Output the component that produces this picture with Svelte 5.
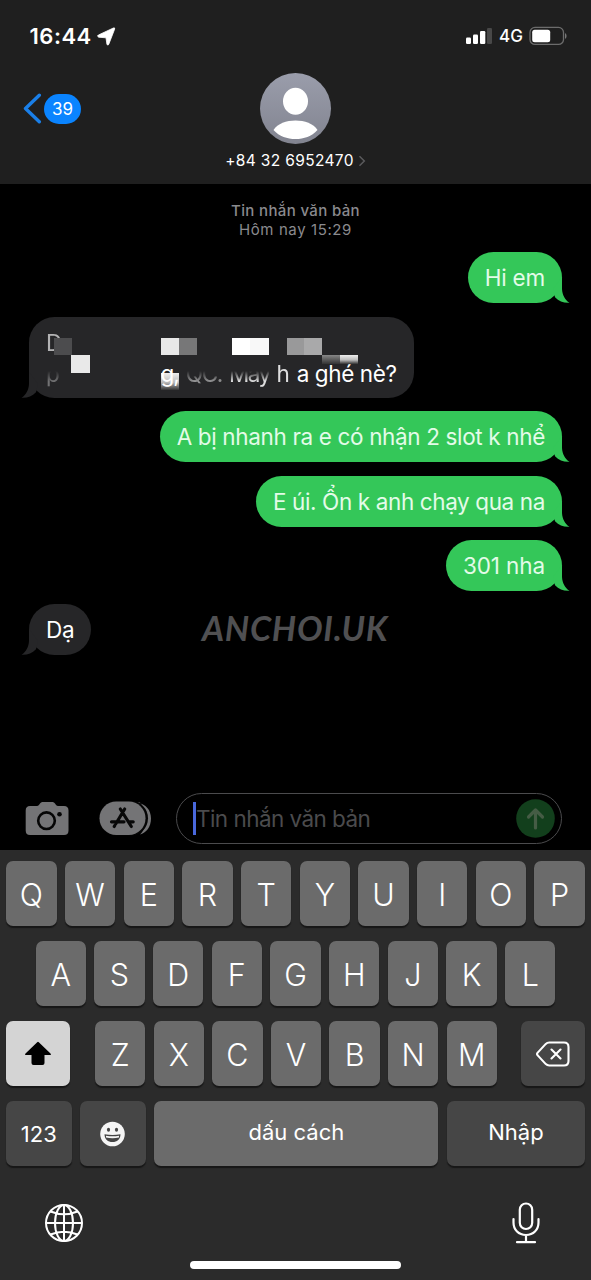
<script>
  const messages = [
    { id: 1, mine: true, text: 'Hi em', tracking: -0.2 },
    { id: 2, mine: false, censored: true },
    { id: 3, mine: true, text: 'A bị nhanh ra e có nhận 2 slot k nhể', tracking: -0.35 },
    { id: 4, mine: true, text: 'E úi. Ổn k anh chạy qua na', tracking: -0.38 },
    { id: 5, mine: true, text: '301 nha', tracking: -0.1 },
    { id: 6, mine: false, text: 'Dạ', tracking: -0.3 }
  ];

  // mosaic squares over the censored message
  const blocks = [
    { x: 25, y: 21, w: 18, h: 17, fill: '#4c4c4e' },
    { x: 42, y: 38, w: 19, h: 18, fill: '#e9e9e9' },
    { x: 132, y: 21, w: 18, h: 17, fill: '#e8e8e8' },
    { x: 150, y: 21, w: 18, h: 17, fill: '#777778' },
    { x: 203, y: 21, w: 18, h: 17, fill: '#ffffff' },
    { x: 221, y: 21, w: 19, h: 17, fill: '#f8f8f8' },
    { x: 258, y: 21, w: 17, h: 17, fill: '#99999a' },
    { x: 275, y: 21, w: 18, h: 17, fill: '#a9a9aa' },
    { x: 293, y: 38, w: 18, h: 9, fill: 'url(#fade-dim)' },
    { x: 311, y: 38, w: 18, h: 9, fill: 'url(#fade-light)' },
    { x: 132, y: 56, w: 18, h: 17, fill: 'url(#fade-light)' }
  ];

  const rows = ['QWERTYUIOP', 'ASDFGHJKL', 'ZXCVBNM'].map((row) => row.split(''));
</script>

<svelte:head>
  <title>Tin nhắn</title>
</svelte:head>

<main>
  <header>
    <div class="status">
      <span class="time">16:44</span>
      <svg class="location" width="19" height="19" viewBox="0 0 19 19" aria-hidden="true">
        <path d="M1.400 8 16.400 1q1.800-.6 1.200 1.200L11.800 17.200q-1 1.900-1.900 0L9 10.800 1.700 10.200q-2.200-1-.3-2.200Z" fill="#fff" stroke="#fff" stroke-width=".8" />
      </svg>
      <span class="spacer"></span>
      <svg width="28" height="18" viewBox="0 0 28 18" aria-hidden="true">
        <rect x="1" y="10.500" width="5" height="6.500" rx="1.200" fill="#fff" />
        <rect x="8" y="7.500" width="5" height="9.500" rx="1.200" fill="#fff" />
        <rect x="15" y="4" width="5.300" height="13" rx="1.200" fill="#fff" />
        <rect x="22" y="1" width="5" height="16" rx="1.200" fill="#484848" />
      </svg>
      <span class="network">4G</span>
      <svg width="39" height="20" viewBox="0 0 39 20" aria-hidden="true">
        <rect x="1" y="1.400" width="33.500" height="17" rx="5" fill="none" stroke="#6c6c6c" stroke-width="1.300" />
        <rect x="3.200" y="3.700" width="18" height="12.500" rx="2.500" fill="#fff" />
        <path d="M36 7.200c2 .5 2 5 0 5.500Z" fill="#777" />
      </svg>
    </div>

    <div class="contact">
      <div class="back">
        <svg width="19" height="31" viewBox="0 0 19 31" aria-hidden="true">
          <path d="M16.300 2.200 2.500 15.500l13.800 13.300" fill="none" stroke="#1a7fe8" stroke-width="3.400" stroke-linecap="round" stroke-linejoin="round" />
        </svg>
        <span class="badge">39</span>
      </div>
      <svg class="avatar" width="72" height="72" viewBox="0 0 72 72" aria-hidden="true">
        <defs>
          <linearGradient id="avatar-bg" x1="0" y1="0" x2="0" y2="1">
            <stop offset="0" stop-color="#9a9dab" />
            <stop offset="1" stop-color="#828490" />
          </linearGradient>
        </defs>
        <circle cx="35.500" cy="36.500" r="35.500" fill="url(#avatar-bg)" />
        <ellipse cx="35.500" cy="29.200" rx="12.500" ry="13.500" fill="#fff" />
        <path d="M13.500 58C17.500 51.500 26.500 48.500 35.500 48.500s18 3 22 9.500C51.500 64.500 44 67 35.500 67s-16-2.500-22-9Z" fill="#fff" />
      </svg>
      <div class="number">
        <span>+84 32 6952470</span>
        <svg width="8" height="12" viewBox="0 0 8 12" aria-hidden="true">
          <path d="m1.500 1.200 4.800 4.800-4.800 4.800" fill="none" stroke="#5a5a5c" stroke-width="1.500" />
        </svg>
      </div>
    </div>
  </header>

  <section class="thread">
    <p class="stamp"><span>Tin nhắn văn bản</span><span class="day">Hôm nay 15:29</span></p>

    {#each messages as message (message.id)}
      <div class="bubble" class:mine={message.mine} class:censored={message.censored}>
        {#if message.censored}
          <span class="line initial">D</span>
          <span class="line">
            <span class="smear first">p</span>
            <span class="covered">g,</span>
            <span class="smear code">QC.</span>
            <span class="smear name">Mấy</span>
            <span class="half">h</span>
            <span class="clear">a ghé nè?</span>
          </span>
          <svg class="mosaic" width="384" height="81" viewBox="0 0 384 81" aria-hidden="true">
            <defs>
              <linearGradient id="fade-light" x1="0" y1="0" x2="0" y2="1">
                <stop offset="0" stop-color="#eee" />
                <stop offset=".55" stop-color="#bbb" />
                <stop offset="1" stop-color="#333" />
              </linearGradient>
              <linearGradient id="fade-dim" x1="0" y1="0" x2="0" y2="1">
                <stop offset="0" stop-color="#888" />
                <stop offset="1" stop-color="#333" />
              </linearGradient>
            </defs>
            {#each blocks as block}
              <rect x={block.x} y={block.y} width={block.w} height={block.h} fill={block.fill} />
            {/each}
          </svg>
        {:else}
          <span style:letter-spacing="{message.tracking}px">{message.text}</span>
        {/if}
        <svg class="tail" width="25" height="27" viewBox="0 0 25 27" aria-hidden="true">
          <path d="M16 0v12c.3 6 3 11 7.500 13.800-5.500.4-10.500-1.300-14.500-5.600L7 12Z" fill="currentColor" />
        </svg>
      </div>
    {/each}

    <span class="watermark">ANCHOI.UK</span>
  </section>

  <section class="composer">
    <svg width="44" height="35" viewBox="0 0 44 35" aria-hidden="true">
      <path d="M5 5h7c1.500 0 2-1 3-2.500S17 1 18.500 1h8c1.500 0 2.500 0 3.500 1.500S31.500 5 33 5h6q4.500 0 4.500 4.500v20q0 4.500-4.500 4.500H5Q.7 34 .7 29.500v-20Q.7 5 5 5Z" fill="#747476" />
      <circle cx="21.500" cy="19.700" r="8.300" fill="none" stroke="#050505" stroke-width="2.600" />
      <circle cx="34.500" cy="13.300" r="2.300" fill="#050505" />
    </svg>
    <svg class="apps" width="54" height="35" viewBox="0 0 54 35" aria-hidden="true">
      <path d="M38 1.500c9 1.500 14 7.500 14 16S47 32 41 33.500c4-4 6-9 6-16S44 5.500 41 1.500Z" fill="#747476" />
      <rect x="0" y="0" width="49" height="34.500" rx="17.200" fill="#050505" />
      <rect x=".5" y=".5" width="46" height="33.500" rx="16.700" fill="#747476" />
      <path d="M25.700 8 17 22.500M21.300 8l11 17.500M12.500 20.800h12.500m5.500 0h3.700M15.200 25.500l.6-1" fill="none" stroke="#080808" stroke-width="3.200" stroke-linecap="round" />
    </svg>
    <div class="field">
      <span class="caret"></span>
      <span class="placeholder">Tin nhắn văn bản</span>
      <svg width="39" height="39" viewBox="0 0 39 39" aria-hidden="true">
        <circle cx="19.500" cy="19.500" r="19.300" fill="#123f1c" />
        <path d="M19.500 29V11.500m-7 6.500 7-7 7 7" fill="none" stroke="#455c45" stroke-width="3.200" stroke-linecap="round" stroke-linejoin="round" />
      </svg>
    </div>
  </section>

  <section class="keyboard">
    {#each rows as row, index}
      <div class="row">
        {#if index === 2}
          <div class="key shift">
            <svg width="28" height="25" viewBox="0 0 28 25" aria-hidden="true">
              <path d="M13.200 1.200q.8-.8 1.600 0L26.500 12.500q1.200 1.500-.8 1.500h-5.200v8q0 2-2 2h-9q-2 0-2-2v-8H2.300q-2 0-.8-1.500Z" fill="#000" />
            </svg>
          </div>
        {/if}
        {#each row as letter}
          <div class="key letter">{letter}</div>
        {/each}
        {#if index === 2}
          <div class="key dark delete">
            <svg width="34" height="26" viewBox="0 0 34 26" aria-hidden="true">
              <path d="M13.200 1.500H28q4.500 0 4.500 4.500v14q0 4.500-4.500 4.500H13.200q-2 0-3.400-1.400L1.700 14.400q-1.300-1.400 0-2.800L9.800 2.900q1.400-1.400 3.400-1.400ZM15.500 8.500l9 9m0-9-9 9" fill="none" stroke="#fff" stroke-width="2.100" stroke-linecap="round" stroke-linejoin="round" />
            </svg>
          </div>
        {/if}
      </div>
    {/each}

    <div class="row bottom">
      <div class="key dark numbers">123</div>
      <div class="key dark emoji">
        <svg width="26" height="26" viewBox="0 0 26 26" aria-hidden="true">
          <circle cx="12.500" cy="13" r="12.300" fill="#f5f5f5" />
          <ellipse cx="8.500" cy="8.800" rx="1.600" ry="2" fill="#444" />
          <ellipse cx="16.500" cy="8.800" rx="1.600" ry="2" fill="#444" />
          <path d="M4.500 13.200q8 1.500 16 0c0 5-3.500 7.800-8 7.800s-8-2.800-8-7.800Z" fill="#444" />
          <path d="M6 14.700q6.500 1.200 13 0v1.700q-6.500 1.500-13 0Z" fill="#f5f5f5" />
        </svg>
      </div>
      <div class="key space">dấu cách</div>
      <div class="key dark return">Nhập</div>
    </div>

    <div class="tools">
      <svg width="40" height="40" viewBox="0 0 40 40" fill="none" stroke="#fff" stroke-width="2" aria-hidden="true">
        <circle cx="20" cy="20" r="18" />
        <ellipse cx="20" cy="20" rx="9" ry="18" />
        <path d="M20 2v36M2 20h36M6.500 8.500q13.500 5.500 27 0M6.500 31.500q13.500-5.500 27 0" />
      </svg>
      <svg width="28" height="42" viewBox="0 0 28 42" fill="none" stroke="#fff" stroke-width="2.200" stroke-linecap="round" aria-hidden="true">
        <rect x="7.800" y="1.500" width="12.400" height="25.500" rx="6.200" />
        <path d="M1.500 17v3.500c0 7.500 5.200 12.500 12.500 12.500s12.500-5 12.500-12.500V17M14 33v7.200M5 40.200h18" />
      </svg>
    </div>
    <div class="home"></div>
  </section>
</main>

<style>
  :global(*) { box-sizing: border-box; }
  :global(body) { margin: 0; background: #000; }
  main { width: 591px; height: 1280px; display: flex; flex-direction: column; overflow: hidden; background: #000; color: #fff; font-family: Inter, "Liberation Sans", sans-serif; }
  svg { display: block; flex: none; }
  header { height: 184px; flex: none; background: #1f1f1f; }

  .status { display: flex; align-items: center; height: 72px; padding: 0 23px 0 29.500px; }
  .time { width: 64px; font-size: 22px; font-weight: 600; letter-spacing: .5px; white-space: nowrap; }
  .location { margin-left: 3px; }
  .spacer { flex: 1; }
  .network { width: 36px; padding-left: 6px; font-size: 17px; font-weight: 500; white-space: nowrap; }

  .contact { display: grid; grid-template-columns: 1fr auto 1fr; }
  .back { display: flex; align-items: center; height: 73px; gap: 2px; padding-left: 23px; }
  .badge { width: 37px; height: 30px; border-radius: 15px; background: #0a84ff; font-size: 17px; line-height: 30px; text-align: center; }
  .number { grid-column: 1 / -1; display: flex; align-items: center; justify-content: center; gap: 4px; height: 31px; font-size: 15.500px; letter-spacing: .35px; }

  .thread { position: relative; flex: none; height: 609px; display: flex; flex-direction: column; align-items: flex-start; padding: 18px 29px 0; }
  .stamp { display: flex; flex-direction: column; align-self: stretch; height: 50.400px; margin: 0; color: #8a8a8e; font-size: 15px; font-weight: 500; line-height: 18.700px; letter-spacing: .35px; text-align: center; }
  .day { font-weight: 400; letter-spacing: .6px; }
  .bubble { position: relative; height: 51px; margin-bottom: 13.300px; padding: 0 17px; border-radius: 25.500px; background: #262628; color: #262628; font-size: 22.500px; line-height: 52px; white-space: nowrap; }
  .bubble > span { color: #fff; }
  .mine { align-self: flex-end; background: #34c759; color: #34c759; }
  .mine > span { color: #e3fbe8; }
  .tail { position: absolute; right: -9px; bottom: -1px; }
  .bubble:not(.mine) .tail { right: auto; left: -9px; transform: scaleX(-1); }

  .censored { width: 384.500px; height: 81.500px; padding-top: 10px; line-height: 31px; letter-spacing: -.1px; }
  .line { display: flex; justify-content: flex-end; height: 31px; gap: 7px; }
  .initial { justify-content: flex-start; opacity: .65; }
  .smear { opacity: .85; -webkit-mask-image: linear-gradient(transparent 42%, #000 75%); mask-image: linear-gradient(transparent 42%, #000 75%); }
  .first { margin-right: auto; opacity: .35; }
  .covered { position: relative; z-index: 1; letter-spacing: -1px; }
  .code { opacity: .5; letter-spacing: -1.300px; }
  .name { letter-spacing: -1.600px; }
  .half { opacity: .85; }
  .clear { letter-spacing: -.4px; }
  .mosaic { position: absolute; left: 0; top: 0; }
  .watermark { position: absolute; top: 423px; left: 202px; color: #505052; font: italic 700 34px/42px Lato, sans-serif; letter-spacing: .75px; white-space: nowrap; }

  .composer { display: flex; align-items: center; height: 57px; flex: none; padding: 0 29px 6px 25px; }
  .apps { margin-left: 30px; }
  .field { display: flex; align-items: center; flex: 1; height: 51px; margin-left: 23px; padding: 0 6px 0 16px; border: 1.500px solid #4b4b4d; border-radius: 26px; }
  .caret { width: 3px; height: 33px; background: #4968dc; }
  .placeholder { flex: 1; color: #4b4b4d; font-size: 22.500px; letter-spacing: -.55px; white-space: nowrap; }

  .keyboard { display: flex; flex-direction: column; flex: 1; gap: 15px; padding: 11px 6px 0; background: #2b2b2b; }
  .row { display: flex; justify-content: center; gap: 8.400px; height: 65px; flex: none; }
  .key { display: flex; align-items: center; justify-content: center; height: 65px; border-radius: 7px; background: #6b6b6b; box-shadow: 0 1.500px 1px #171717; font-size: 22px; }
  .letter { width: 50.300px; padding-top: 1px; font-size: 30.500px; font-weight: 350; }
  .dark { background: #464646; }
  .shift { width: 64px; margin-right: 17px; background: #d4d4d4; }
  .delete { width: 64px; margin-left: 16px; }
  .numbers, .emoji { width: 65.500px; }
  .bottom { gap: 8.700px; }
  .space { flex: 1; padding-bottom: 3px; }
  .return { width: 138px; padding-bottom: 3px; }
  .tools { display: flex; justify-content: space-between; align-items: center; height: 42px; margin-top: 21px; padding: 0 51px 0 38px; }
  .tools { padding-right: 45px; }
  .home { width: 211px; height: 8px; margin: 2px auto 0; border-radius: 4px; background: #fff; }
</style>
